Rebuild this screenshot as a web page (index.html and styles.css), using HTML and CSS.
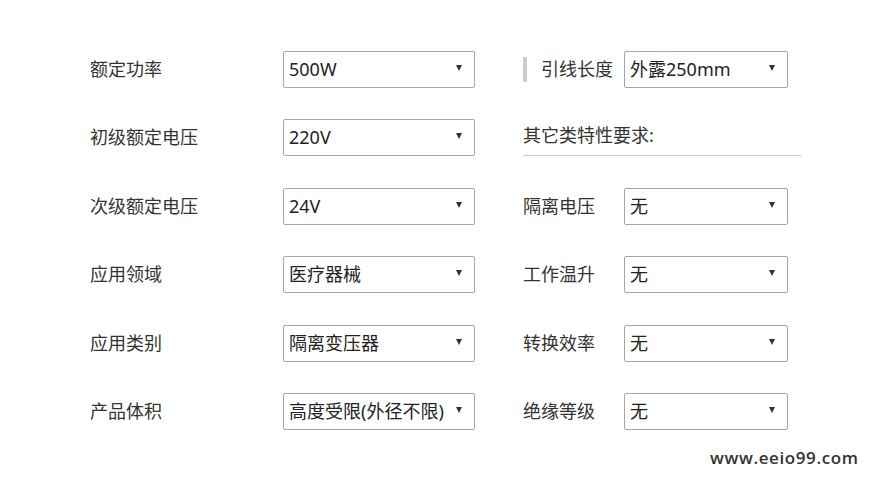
FILE: index.html
```html
<!DOCTYPE html>
<html lang="zh-CN">
<head>
    <meta charset="UTF-8">
    <meta name="viewport" content="width=device-width, initial-scale=1.0">
    <title>产品参数</title>
    <link rel="stylesheet" href="styles.css">
</head>
<body>
    <div class="form">
        <!-- row 1 -->
        <div class="label">额定功率</div>
        <div class="select"><span>500W</span><i class="arrow"></i></div>
        <div class="spacer"></div>
        <div class="label label-bar"><b class="bar"></b>引线长度</div>
        <div class="select"><span>外露250mm</span><i class="arrow"></i></div>

        <!-- row 2 -->
        <div class="label">初级额定电压</div>
        <div class="select"><span>220V</span><i class="arrow"></i></div>
        <div class="spacer"></div>
        <div class="heading">其它类特性要求:</div>

        <!-- row 3 -->
        <div class="label">次级额定电压</div>
        <div class="select"><span>24V</span><i class="arrow"></i></div>
        <div class="spacer"></div>
        <div class="label">隔离电压</div>
        <div class="select"><span>无</span><i class="arrow"></i></div>

        <!-- row 4 -->
        <div class="label">应用领域</div>
        <div class="select"><span>医疗器械</span><i class="arrow"></i></div>
        <div class="spacer"></div>
        <div class="label">工作温升</div>
        <div class="select"><span>无</span><i class="arrow"></i></div>

        <!-- row 5 -->
        <div class="label">应用类别</div>
        <div class="select"><span>隔离变压器</span><i class="arrow"></i></div>
        <div class="spacer"></div>
        <div class="label">转换效率</div>
        <div class="select"><span>无</span><i class="arrow"></i></div>

        <!-- row 6 -->
        <div class="label">产品体积</div>
        <div class="select"><span>高度受限(外径不限)</span><i class="arrow"></i></div>
        <div class="spacer"></div>
        <div class="label">绝缘等级</div>
        <div class="select"><span>无</span><i class="arrow"></i></div>
    </div>

    <div class="site">www.eeio99.com</div>
</body>
</html>
```

FILE: styles.css
```css
* {
    margin: 0;
    padding: 0;
    box-sizing: border-box;
}

body {
    font-family: "Noto Sans", "Noto Sans CJK SC", sans-serif;
    font-size: 18px;
    color: #333;
    background-color: #fff;
    width: 880px;
    height: 480px;
    overflow: hidden;
}

/* Form grid */
.form {
    display: grid;
    grid-template-columns: 193px 192px 48px 101px 164px;
    grid-template-rows: repeat(6, 37px);
    row-gap: 31.4px;
    padding: 51px 0 0 90px;
}

.label {
    display: flex;
    align-items: center;
    line-height: 1;
    padding-bottom: 1px;
}

.label-bar .bar {
    display: inline-block;
    width: 4px;
    height: 25px;
    background-color: #ccc;
    margin-right: 14px;
}

.heading {
    grid-column: 4 / span 2;
    width: 278px;
    border-bottom: 1px solid #c8c8c8;
    display: flex;
    align-items: flex-end;
    padding-bottom: 11px;
    line-height: 1;
}

/* Fake select boxes */
.select {
    display: flex;
    align-items: center;
    justify-content: space-between;
    border: 1px solid #a6a6a6;
    border-radius: 2px;
    padding: 0 12px 1px 5px;
    background-color: #fff;
    color: #222;
    line-height: 1;
}

.select span {
    white-space: nowrap;
}

.arrow {
    width: 0;
    height: 0;
    border-left: 3.5px solid transparent;
    border-right: 3.5px solid transparent;
    border-top: 6px solid #333;
    margin-bottom: 2px;
    flex-shrink: 0;
}

/* Watermark */
.site {
    position: absolute;
    left: 710px;
    top: 446px;
    font-family: "Open Sans", sans-serif;
    font-size: 17px;
    font-weight: 600;
    color: #333;
    letter-spacing: 0.6px;
}
```
